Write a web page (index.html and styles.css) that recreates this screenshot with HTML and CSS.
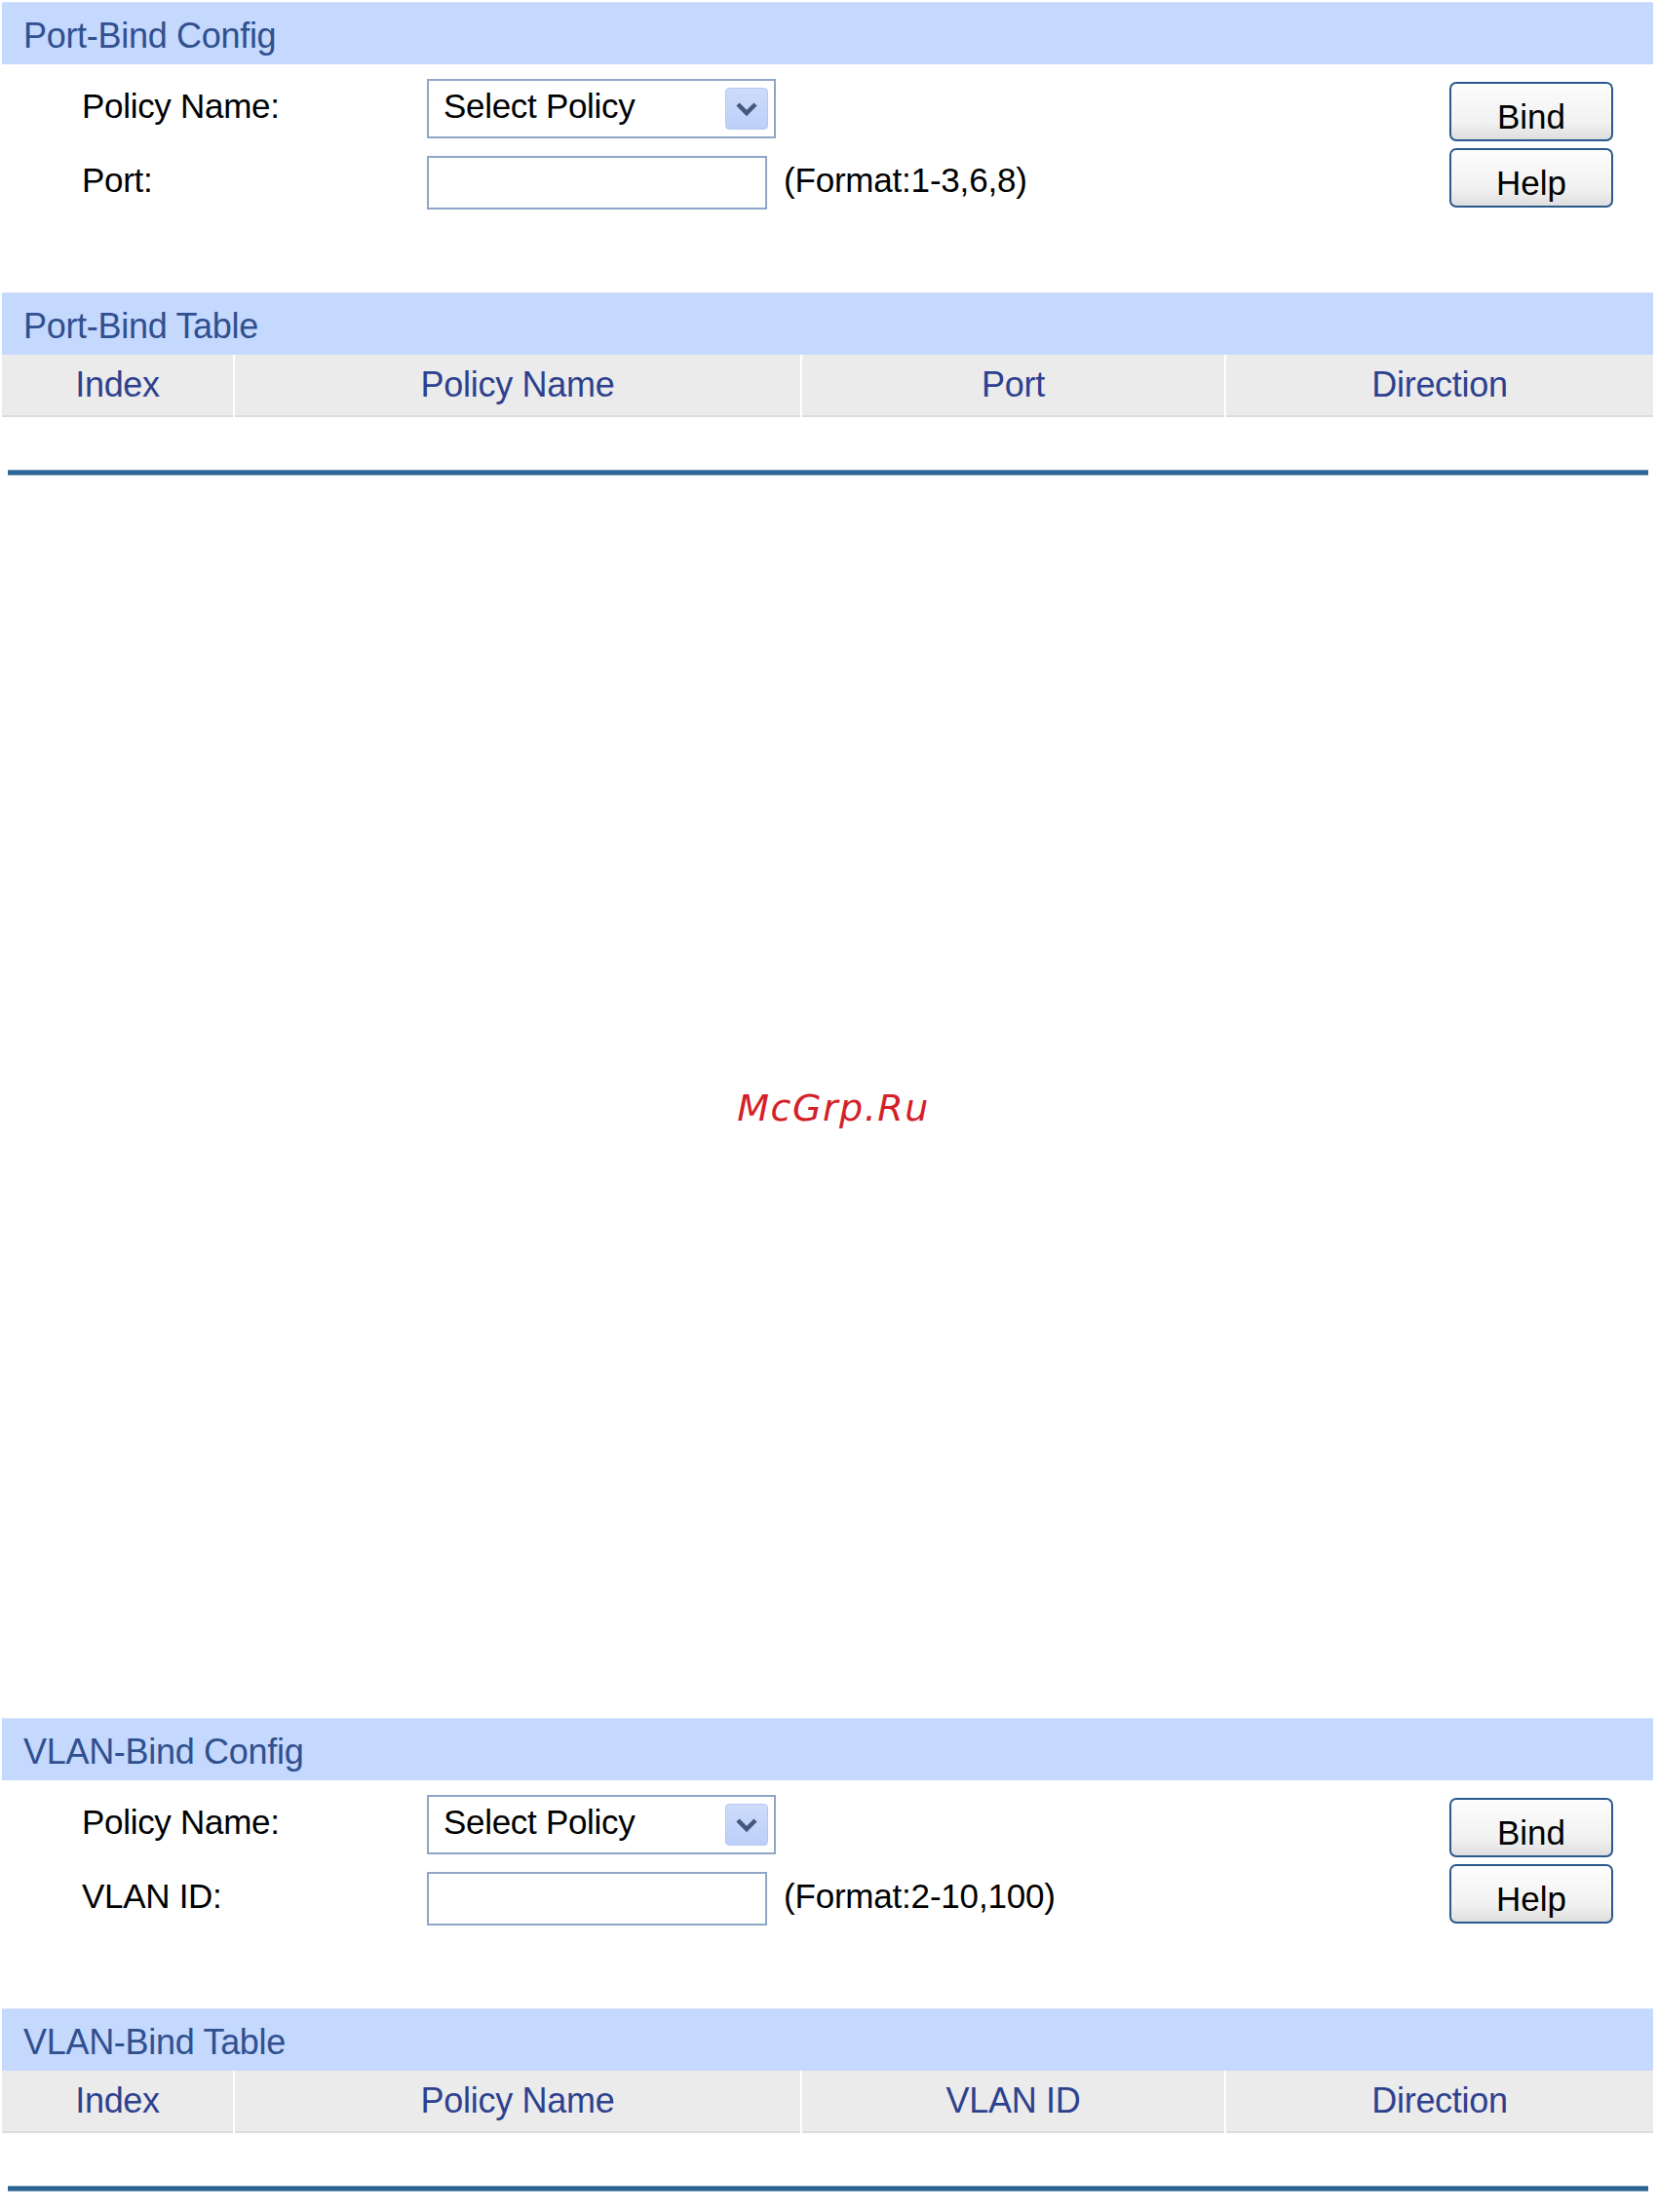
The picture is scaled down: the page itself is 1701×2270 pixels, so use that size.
FILE: index.html
```html
<!DOCTYPE html>
<html>
<head>
<meta charset="utf-8">
<title>Port-Bind / VLAN-Bind</title>
<link rel="stylesheet" href="styles.css">
</head>
<body>
<div class="page">
  <section class="panel">
    <div class="band">Port-Bind Config</div>
    <div class="config">
      <div class="form">
        <div class="row">
          <span class="label">Policy Name:</span>
          <div class="select">
            <span class="select-text">Select Policy</span>
            <span class="arrow"><svg width="24" height="16" viewBox="0 0 24 16"><polyline points="3,3 12,12 21,3" fill="none" stroke="#44587f" stroke-width="4.5"/></svg></span>
          </div>
        </div>
        <div class="row">
          <span class="label">Port:</span>
          <div class="input"></div>
          <span class="hint">(Format:1-3,6,8)</span>
        </div>
      </div>
      <div class="buttons">
        <button class="btn">Bind</button>
        <button class="btn">Help</button>
      </div>
    </div>
    <div class="band">Port-Bind Table</div>
    <div class="grid">
      <div class="th">Index</div>
      <div class="th">Policy Name</div>
      <div class="th">Port</div>
      <div class="th">Direction</div>
    </div>
    <div class="rule"></div>
  </section>

  <div class="spacer"><span class="watermark">McGrp.Ru</span></div>

  <section class="panel">
    <div class="band">VLAN-Bind Config</div>
    <div class="config">
      <div class="form">
        <div class="row">
          <span class="label">Policy Name:</span>
          <div class="select">
            <span class="select-text">Select Policy</span>
            <span class="arrow"><svg width="24" height="16" viewBox="0 0 24 16"><polyline points="3,3 12,12 21,3" fill="none" stroke="#44587f" stroke-width="4.5"/></svg></span>
          </div>
        </div>
        <div class="row">
          <span class="label">VLAN ID:</span>
          <div class="input"></div>
          <span class="hint">(Format:2-10,100)</span>
        </div>
      </div>
      <div class="buttons">
        <button class="btn">Bind</button>
        <button class="btn">Help</button>
      </div>
    </div>
    <div class="band">VLAN-Bind Table</div>
    <div class="grid">
      <div class="th">Index</div>
      <div class="th">Policy Name</div>
      <div class="th">VLAN ID</div>
      <div class="th">Direction</div>
    </div>
    <div class="rule"></div>
  </section>
</div>
</body>
</html>
```
FILE: styles.css
```css
html, body {
  margin: 0;
  padding: 0;
  background: #ffffff;
}
body {
  font-family: "Liberation Sans", Arial, sans-serif;
  color: #000;
}
.page {
  width: 1694px;
  margin-left: 2px;
  padding-top: 2px;
}
.band {
  height: 64px;
  box-sizing: border-box;
  background: #c5d8fd;
  border-top: 1px solid #d6e3fd;
  color: #30508f;
  font-size: 36px;
  line-height: 62px;
  padding-top: 3px;
  padding-left: 22px;
  letter-spacing: -0.3px;
  overflow: hidden;
}
.config {
  height: 234px;
  box-sizing: border-box;
  padding-top: 15px;
  display: flex;
  justify-content: space-between;
  align-items: flex-start;
}
.form {
  display: flex;
  flex-direction: column;
  gap: 18px;
}
.row {
  display: flex;
  align-items: center;
}
.label {
  width: 436px;
  box-sizing: border-box;
  padding-left: 82px;
  padding-bottom: 5px;
  font-size: 35px;
  letter-spacing: -0.3px;
}
.select {
  width: 358px;
  height: 61px;
  box-sizing: border-box;
  border: 2px solid #8ea7c7;
  background: #fff;
  display: flex;
  align-items: center;
  justify-content: space-between;
  padding-left: 15px;
  padding-right: 6px;
}
.select-text {
  font-size: 35px;
  letter-spacing: -0.3px;
  padding-bottom: 5px;
}
.arrow {
  width: 44px;
  height: 43px;
  box-sizing: border-box;
  border: 1px solid #b4c7ef;
  border-radius: 4px;
  background: linear-gradient(#cddcfb, #bccff8);
  display: flex;
  align-items: center;
  justify-content: center;
}
.input {
  width: 349px;
  height: 55px;
  box-sizing: border-box;
  border: 2px solid #8ea7c7;
  background: #fff;
}
.hint {
  margin-left: 17px;
  padding-bottom: 5px;
  font-size: 35px;
  letter-spacing: -0.2px;
}
.buttons {
  display: flex;
  flex-direction: column;
  gap: 7px;
  padding-top: 3px;
  margin-right: 41px;
}
.btn {
  width: 168px;
  height: 61px;
  box-sizing: border-box;
  border: 2px solid #2a5a8c;
  border-radius: 7px;
  background: linear-gradient(#fdfdfd 0%, #f1f1f1 70%, #dedede 100%);
  font-family: "Liberation Sans", Arial, sans-serif;
  font-size: 35px;
  color: #000;
  padding: 10px 0 0 0;
  line-height: 40px;
  text-align: center;
}
.grid {
  display: grid;
  grid-template-columns: 237px 580px 433px 438px;
  column-gap: 2px;
  background: #ffffff;
}
.th {
  height: 64px;
  box-sizing: border-box;
  background: #ebebeb;
  border-bottom: 2px solid #dcdcdc;
  color: #2d418e;
  font-size: 36px;
  line-height: 62px;
  text-align: center;
  letter-spacing: -0.3px;
}
.rule {
  margin-top: 54px;
  margin-left: 6px;
  width: 1683px;
  height: 6px;
  box-sizing: border-box;
  background: #2c6493;
  border-top: 1px solid #6f98bb;
  border-bottom: 1px solid #7aa0c0;
}
.spacer {
  height: 1275px;
  box-sizing: border-box;
  padding-top: 627px;
  padding-left: 12px;
  text-align: center;
}
.watermark {
  font-family: "DejaVu Sans", sans-serif;
  font-style: oblique;
  font-size: 38px;
  letter-spacing: 1.5px;
  color: #d42027;
}
```
